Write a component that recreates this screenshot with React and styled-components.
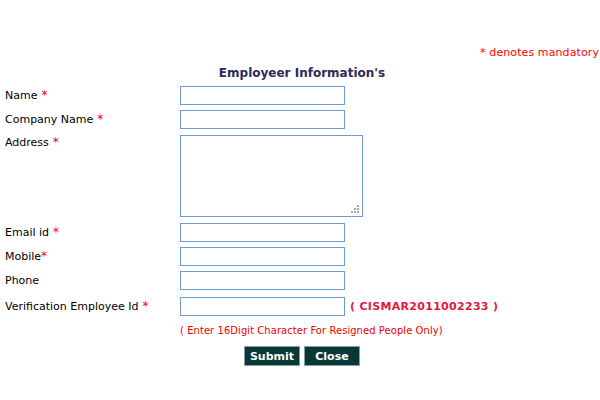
import React from "react";
import styled, { createGlobalStyle } from "styled-components";

const Global = createGlobalStyle`
  html, body { margin: 0; padding: 0; background: #fff; }
  body { font-family: "DejaVu Sans", Verdana, sans-serif; font-size: 11px; color: #000; }
`;

const Page = styled.div`
  width: 600px;
  padding-top: 46px;
`;

const Mandatory = styled.div`
  text-align: right;
  color: #ff0000;
  line-height: 14px;
  padding-right: 1px;
  letter-spacing: 0.1px;
`;

const Heading = styled.h1`
  margin: 6px 0 0;
  font-size: 12px;
  font-weight: bold;
  color: #2b2b5c;
  text-align: center;
  line-height: 15px;
  padding-left: 4px;
`;

const Form = styled.div`
  padding-left: 5px;
  margin-top: 5px;
`;

const Row = styled.div`
  display: flex;
  align-items: ${(p) => (p.$top ? "flex-start" : "center")};
  margin-top: ${(p) => p.$mt || 0}px;
`;

const Label = styled.label`
  width: 175px;
  flex: none;
  line-height: 14px;
`;

const Star = styled.span`
  color: #ff0000;
  font-size: 12px;
  margin-left: ${(p) => (p.$tight ? 0 : 4)}px;
`;

const Input = styled.input`
  box-sizing: border-box;
  width: 165px;
  height: 19px;
  margin: 0;
  border: 1px solid #6d9bd1;
  padding: 1px 3px;
  font: inherit;
  outline: none;
`;

const AreaWrap = styled.div`
  position: relative;
  width: 183px;
  height: 82px;
`;

const Area = styled.textarea`
  box-sizing: border-box;
  width: 183px;
  height: 82px;
  margin: 0;
  border: 1px solid #6d9bd1;
  padding: 2px;
  font: inherit;
  resize: none;
  outline: none;
  display: block;
`;

const Grip = styled.svg`
  position: absolute;
  right: 3px;
  bottom: 3px;
`;

const Code = styled.span`
  margin-left: 5px;
  color: #e3173f;
  font-weight: bold;
  font-size: 11px;
  letter-spacing: 0.3px;
`;

const Hint = styled.div`
  margin: 8px 0 0 175px;
  color: #f00000;
  font-size: 10px;
  line-height: 14px;
  letter-spacing: 0.05px;
`;

const Buttons = styled.div`
  display: flex;
  justify-content: center;
  gap: 4px;
  margin-top: 8px;
  padding-left: 4px;
`;

const Button = styled.button`
  box-sizing: border-box;
  width: 56px;
  height: 20px;
  margin: 0;
  padding: 0;
  background: #073838;
  color: #fff;
  border: 1px solid #8f9c9c;
  font-family: "DejaVu Sans", Verdana, sans-serif;
  font-size: 11px;
  font-weight: bold;
  cursor: pointer;
`;

function Field({ label, star, tight, mt }) {
  return (
    <Row $mt={mt}>
      <Label>
        {label}
        {star && <Star $tight={tight}>*</Star>}
      </Label>
      <Input type="text" />
    </Row>
  );
}

export default function App() {
  return (
    <>
      <Global />
      <Page>
        <Mandatory>* denotes mandatory</Mandatory>
        <Heading>Employeer Information's</Heading>
        <Form>
          <Field label="Name" star mt={0} />
          <Field label="Company Name" star mt={5} />
          <Row $top $mt={6}>
            <Label>
              Address<Star>*</Star>
            </Label>
            <AreaWrap>
              <Area />
              <Grip width="9" height="9" viewBox="0 0 9 9">
                <g fill="#aaa">
                  <rect x="6" y="0" width="2" height="2" />
                  <rect x="3" y="3" width="2" height="2" />
                  <rect x="6" y="3" width="2" height="2" />
                  <rect x="0" y="6" width="2" height="2" />
                  <rect x="3" y="6" width="2" height="2" />
                  <rect x="6" y="6" width="2" height="2" />
                </g>
              </Grip>
            </AreaWrap>
          </Row>
          <Field label="Email id" star mt={6} />
          <Field label="Mobile" star tight mt={5} />
          <Field label="Phone" mt={5} />
          <Row $mt={7}>
            <Label>
              Verification Employee Id<Star>*</Star>
            </Label>
            <Input type="text" />
            <Code>( CISMAR2011002233 )</Code>
          </Row>
          <Hint>( Enter 16Digit Character For Resigned People Only)</Hint>
        </Form>
        <Buttons>
          <Button type="button">Submit</Button>
          <Button type="button">Close</Button>
        </Buttons>
      </Page>
    </>
  );
}
